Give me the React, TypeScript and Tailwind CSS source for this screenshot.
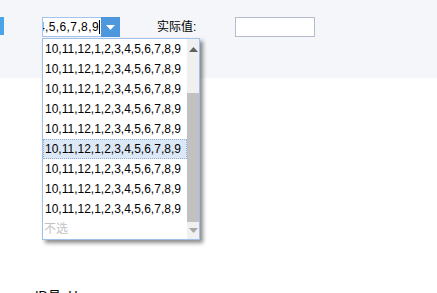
import React from "react";

const ROW = "10,11,12,1,2,3,4,5,6,7,8,9";

export default function App() {
  const rows = Array.from({ length: 9 }, (_, i) => i);
  return (
    <div
      className="relative w-[437px] h-[293px] overflow-hidden bg-white text-[12px] text-black"
      style={{ fontFamily: '"Liberation Sans", "Noto Sans CJK SC", sans-serif' }}
    >
      <div className="h-[78px] bg-[#f5f6f9] flex items-start pt-[17px]">
        <div className="w-[4px] h-[18px] bg-[#4ba3e8]" />
        <div className="ml-[38px] flex h-[20px]">
          <div className="w-[59px] h-[20px] border border-r-0 border-[#a3c4ec] bg-white overflow-hidden flex justify-end items-center pr-[1px] leading-[18px] whitespace-nowrap">
            <span className="tracking-[0.4px]">{ROW}</span>
            <span className="w-px h-[14px] bg-black shrink-0" />
          </div>
          <div className="w-[19px] h-[20px] bg-[#4d97dc] flex items-center justify-center">
            <svg width="9" height="5" viewBox="0 0 9 5">
              <path d="M0 0 H9 L4.5 5 Z" fill="#ffffff" />
            </svg>
          </div>
        </div>
        <div className="ml-[37px] leading-[20px] h-[20px]">实际值:</div>
        <div className="ml-[39px] w-[80px] h-[20px] border border-[#b6bccd] bg-white" />
      </div>

      <div className="absolute left-[42px] top-[38px] w-[158px] h-[202px] border border-[#9fc0ea] bg-white flex shadow-[3px_3px_4px_rgba(0,0,0,0.45)]">
        <div className="flex-1 flex flex-col overflow-hidden">
          {rows.map((i) =>
            i === 5 ? (
              <div
                key={i}
                className="h-[20px] pl-[1px] leading-[18px] bg-[#dde8f6] border border-dotted border-[#8eb0db] whitespace-nowrap"
              >
                {ROW}
              </div>
            ) : (
              <div key={i} className="h-[20px] pl-[2px] leading-[20px] whitespace-nowrap">
                {ROW}
              </div>
            )
          )}
          <div className="h-[20px] pl-[1px] leading-[20px] text-[#c3c3c3]">不选</div>
        </div>
        <div className="w-[12px] bg-[#f0f0f0] flex flex-col items-center">
          <div className="h-[17px] w-full flex items-end justify-center pb-[4px]">
            <svg width="9" height="5" viewBox="0 0 9 5">
              <path d="M4.5 0 L9 5 H0 Z" fill="#606060" />
            </svg>
          </div>
          <div className="mt-[37px] w-full h-[129px] bg-[#c1c1c1]" />
          <div className="flex-1 w-full flex items-center justify-center">
            <svg width="9" height="5" viewBox="0 0 9 5">
              <path d="M0 0 H9 L4.5 5 Z" fill="#a8a8a8" />
            </svg>
          </div>
        </div>
      </div>

      <div className="pl-[35px] pt-[211px] leading-[14px] text-[13px]">ID号: Hu</div>
    </div>
  );
}
